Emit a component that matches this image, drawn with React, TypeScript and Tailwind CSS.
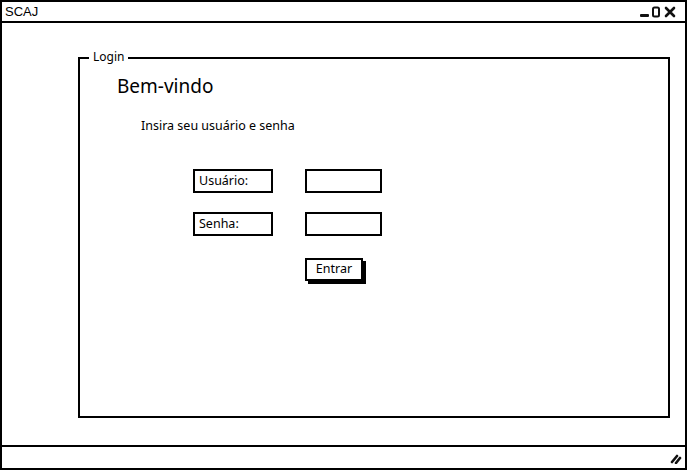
import React from "react";

const sketch = { fontFamily: '"Noto Sans", "Open Sans", sans-serif' };

export default function App() {
  return (
    <div className="w-[687px] h-[470px] bg-white overflow-hidden">
      <div className="w-[687px] h-[470px] border-2 border-black flex flex-col">
        {/* Title bar */}
        <div className="h-[21px] border-b-2 border-black flex items-center justify-between pl-[3px] pr-[4px] shrink-0">
          <span className="text-[13px] leading-none text-black" style={{ fontFamily: '"Liberation Sans", Arial, sans-serif' }}>
            SCAJ
          </span>
          <svg width="42" height="14" viewBox="0 0 42 14" className="mt-[1px]">
            <rect x="1" y="9" width="9" height="3" fill="#111" rx="1" />
            <rect x="14" y="2.5" width="6" height="9" fill="none" stroke="#111" strokeWidth="2" rx="1.5" />
            <path d="M27 3 L35 11 M35 3 L27 11" stroke="#111" strokeWidth="2.6" strokeLinecap="round" />
          </svg>
        </div>

        {/* Content */}
        <div className="flex-1 relative">
          <div className="ml-[76px] mt-[34px] w-[592px] h-[361px] border-2 border-black relative" style={sketch}>
            <span className="absolute left-[9px] -top-[10px] bg-white px-[4px] text-[12px] leading-[15px] text-black">
              Login
            </span>
            <div className="flex flex-col">
              <div className="ml-[37px] mt-[15px] text-[19px] leading-[24px] text-black">Bem-vindo</div>
              <div className="ml-[61px] mt-[20px] text-[12.5px] leading-[16px] text-black">Insira seu usuário e senha</div>
              <div className="ml-[113px] mt-[35px] flex flex-col gap-[19px]">
                <div className="flex gap-[32px]">
                  <div className="w-[80px] h-[24px] border-2 border-black flex items-center pl-[4px] text-[12.5px] text-black">
                    Usuário:
                  </div>
                  <div className="w-[77px] h-[24px] border-2 border-black" />
                </div>
                <div className="flex gap-[32px]">
                  <div className="w-[80px] h-[24px] border-2 border-black flex items-center pl-[4px] text-[12.5px] text-black">
                    Senha:
                  </div>
                  <div className="w-[77px] h-[24px] border-2 border-black" />
                </div>
                <div className="ml-[112px] mt-[3px]">
                  <div className="w-[58px] h-[23px] border-2 border-black shadow-[3px_3px_0_0_#000] flex items-center justify-center text-[12.5px] text-black bg-white">
                    Entrar
                  </div>
                </div>
              </div>
            </div>
          </div>
        </div>

        {/* Status bar */}
        <div className="h-[23px] border-t-2 border-black flex items-center justify-end pr-[3px] shrink-0">
          <svg width="12" height="12" viewBox="0 0 12 12">
            <path d="M2 10 L7 4 M6 11 L10 6" stroke="#111" strokeWidth="2.6" strokeLinecap="round" />
          </svg>
        </div>
      </div>
    </div>
  );
}
